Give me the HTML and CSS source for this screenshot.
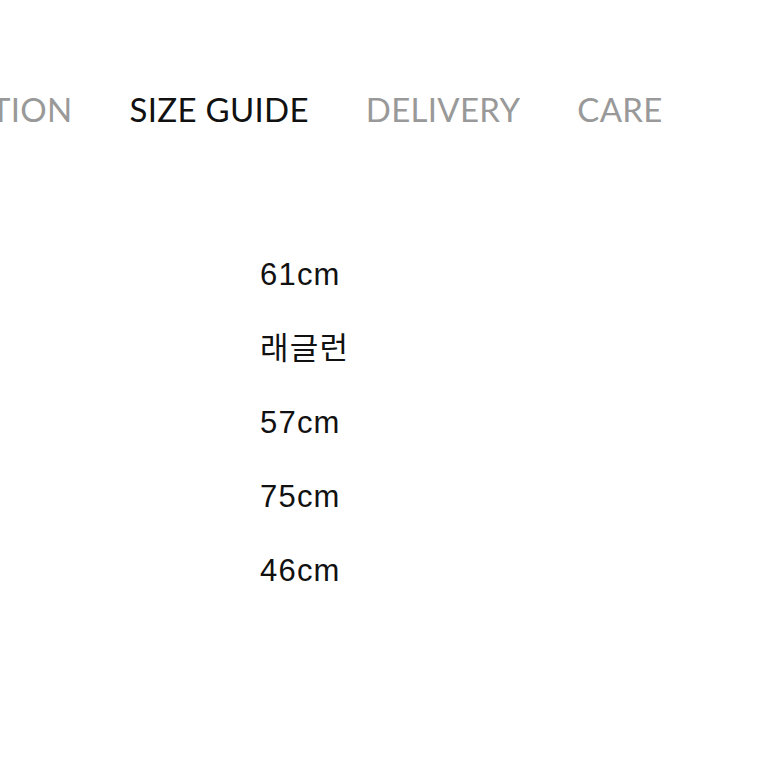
FILE: index.html
```html
<!DOCTYPE html>
<html lang="ko">
<head>
  <meta charset="UTF-8" />
  <meta name="viewport" content="width=device-width, initial-scale=1.0"/>
  <title>Size Guide</title>
  <link rel="stylesheet" href="styles.css">
</head>
<body>

  <nav class="tabs">
    <span class="tab">DESCRIPTION</span>
    <span class="tab active">SIZE GUIDE</span>
    <span class="tab">DELIVERY</span>
    <span class="tab">CARE</span>
  </nav>

  <ul class="sizes">
    <li>61cm</li>
    <li>래글런</li>
    <li>57cm</li>
    <li>75cm</li>
    <li>46cm</li>
  </ul>

</body>
</html>
```

FILE: styles.css
```css
body {
  margin: 0;
  padding: 0;
  background: #fff;
  width: 783px;
  height: 783px;
  overflow: hidden;
}

.tabs {
  display: flex;
  gap: 57px;
  padding-top: 89px;
  margin-left: -145px;
  white-space: nowrap;
  font-family: Lato, "Noto Sans", sans-serif;
  font-size: 33px;
  letter-spacing: 0.3px;
  line-height: 40px;
  color: #999;
}

.tab.active {
  color: #111;
}

.sizes {
  list-style: none;
  margin: 0;
  padding: 0 0 0 260px;
  padding-top: 129px;
  display: flex;
  flex-direction: column;
  gap: 40px;
  font-family: "Liberation Sans", Arial, "Noto Sans CJK KR", sans-serif;
  font-size: 31px;
  letter-spacing: 1.2px;
  line-height: 34px;
  color: #111;
}
```
